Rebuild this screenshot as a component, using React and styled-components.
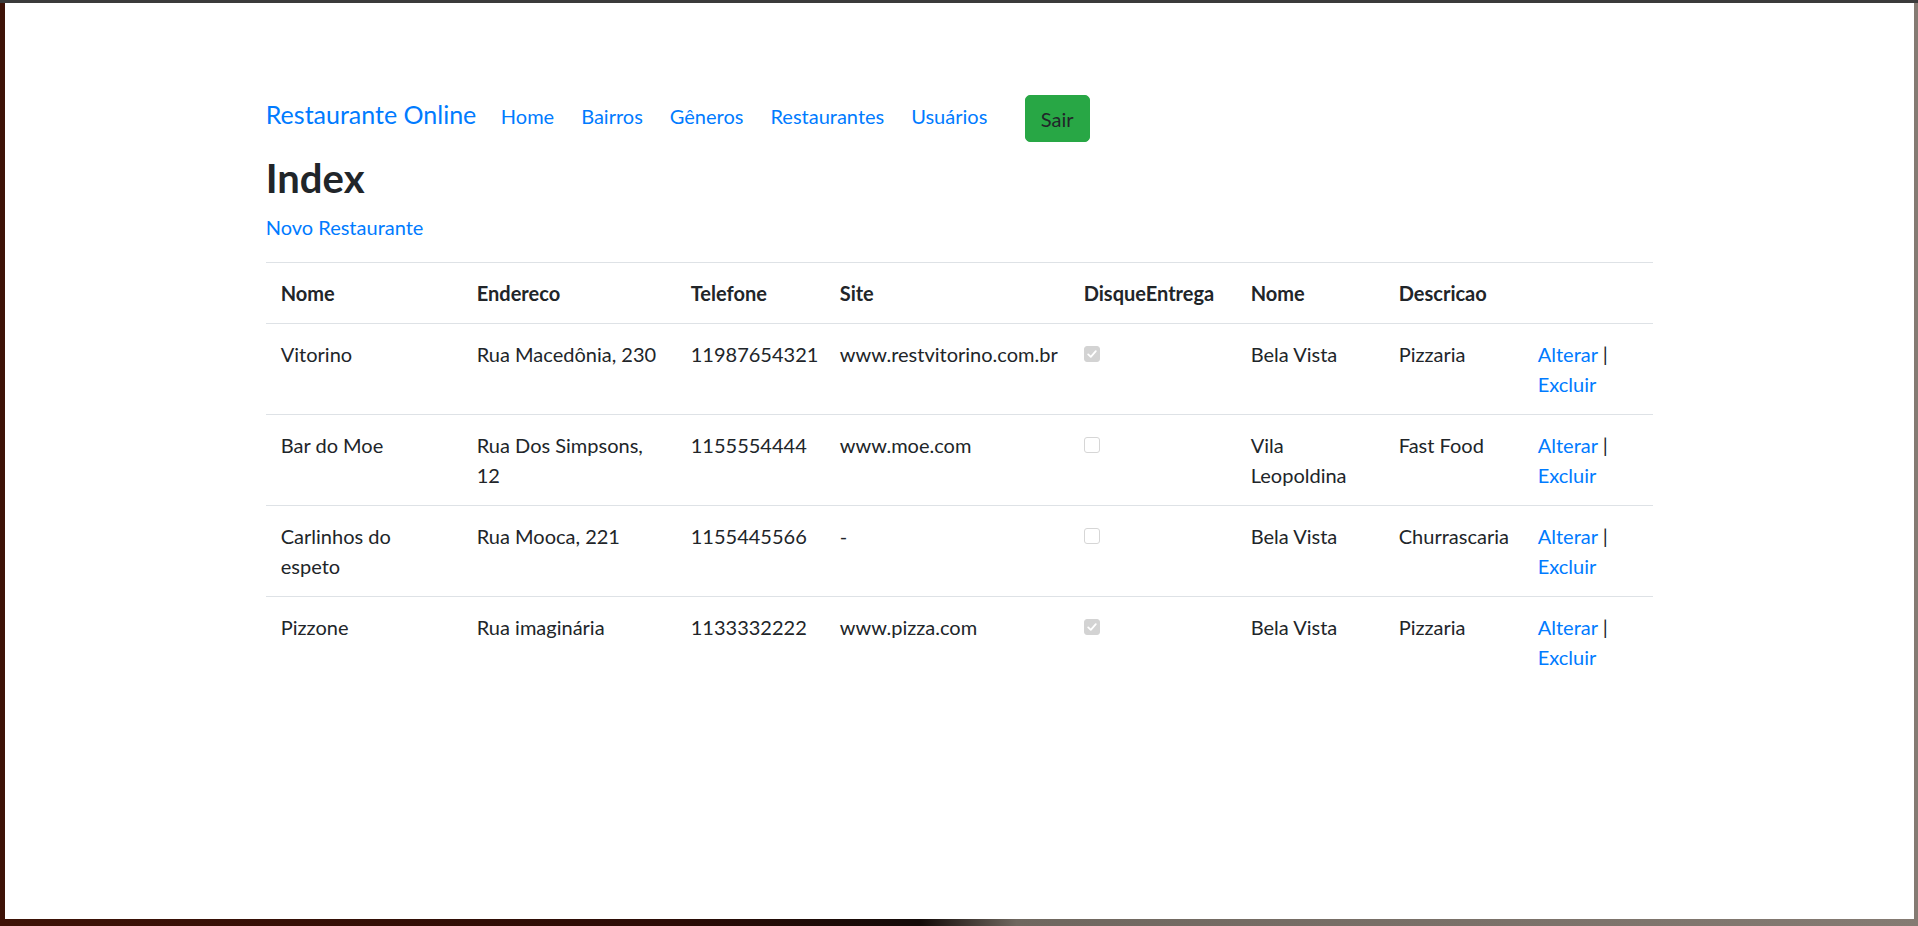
import React from "react";
import styled, { createGlobalStyle } from "styled-components";

const GlobalStyle = createGlobalStyle`
  html, body {
    margin: 0;
    padding: 0;
  }
  body {
    font-family: Lato, "Liberation Sans", sans-serif;
    color: #212529;
    background: #2a0b06;
  }
  * { box-sizing: border-box; }
`;

const Frame = styled.div`
  width: 100vw;
  height: 926px;
  border-top: 3px solid #3b3b3b;
  padding: 0 4px 7px 5px;
  background: linear-gradient(
    90deg,
    #3e1307 0%,
    #2c0c06 35%,
    #140b09 48%,
    #6f675f 53%,
    #857b73 100%
  );
`;

const Window = styled.div`
  background: #ffffff;
  height: 100%;
  overflow: hidden;
`;

const Container = styled.div`
  max-width: 1425px;
  margin: 0 auto;
  padding: 0 18.75px;
`;

const Nav = styled.nav`
  display: flex;
  align-items: flex-start;
  margin-top: 92px;
  height: 47.5px;
`;

const Brand = styled.a`
  font-size: 25px;
  line-height: 37.5px;
  margin-top: 1px;
  color: #007bff;
  text-decoration: none;
  margin-right: 11px;
`;

const NavList = styled.ul`
  display: flex;
  list-style: none;
  margin: 0;
  padding: 0;
`;

const NavLink = styled.a`
  display: block;
  font-size: 20px;
  line-height: 30px;
  margin-top: 5.5px;
  padding: 0 13.5px;
  color: #007bff;
  text-decoration: none;
`;

const LogoutButton = styled.button`
  margin-left: 24px;
  font-family: inherit;
  font-size: 20px;
  line-height: 30px;
  padding: 7.5px 15px;
  color: #212529;
  background: #28a745;
  border: 1.25px solid #28a745;
  border-radius: 5px;
  cursor: pointer;
`;

const Title = styled.h1`
  font-size: 40px;
  font-weight: 700;
  line-height: 48px;
  margin: 11px 0 10px;
`;

const Para = styled.p`
  margin: 0 0 20px;
  font-size: 20px;
  line-height: 30px;
`;

const Link = styled.a`
  color: #007bff;
  text-decoration: none;
`;

const Table = styled.table`
  width: 100%;
  border-collapse: collapse;
  table-layout: fixed;
  font-size: 20px;
  line-height: 30px;
  color: #212529;
`;

const Th = styled.th`
  text-align: left;
  font-weight: 700;
  padding: 15px;
  vertical-align: bottom;
  border-top: 1px solid #dee2e6;
  border-bottom: 1px solid #dee2e6;
  white-space: nowrap;
`;

const Td = styled.td`
  padding: 15px;
  vertical-align: top;
  border-top: 1px solid #dee2e6;
`;

const Check = styled.span`
  display: block;
  width: 16px;
  height: 16px;
  margin-top: 7px;
  border-radius: 3px;
  background: ${(p) => (p.$checked ? "#d3d3d3" : "#ffffff")};
  border: 1px solid ${(p) => (p.$checked ? "#d3d3d3" : "#d6d6d6")};
  position: relative;
  svg {
    position: absolute;
    left: 1px;
    top: 1px;
  }
`;

const Checkbox = ({ checked }) => (
  <Check $checked={checked}>
    {checked && (
      <svg width="12" height="12" viewBox="0 0 12 12" fill="none">
        <path
          d="M2.2 6.4 L4.8 8.9 L9.8 3.2"
          stroke="#ffffff"
          strokeWidth="1.8"
          strokeLinecap="round"
          strokeLinejoin="round"
        />
      </svg>
    )}
  </Check>
);

const rows = [
  {
    nome: "Vitorino",
    endereco: "Rua Macedônia, 230",
    telefone: "11987654321",
    site: "www.restvitorino.com.br",
    disque: true,
    bairro: "Bela Vista",
    genero: "Pizzaria",
  },
  {
    nome: "Bar do Moe",
    endereco: "Rua Dos Simpsons, 12",
    telefone: "1155554444",
    site: "www.moe.com",
    disque: false,
    bairro: "Vila Leopoldina",
    genero: "Fast Food",
  },
  {
    nome: "Carlinhos do espeto",
    endereco: "Rua Mooca, 221",
    telefone: "1155445566",
    site: "-",
    disque: false,
    bairro: "Bela Vista",
    genero: "Churrascaria",
  },
  {
    nome: "Pizzone",
    endereco: "Rua imaginária",
    telefone: "1133332222",
    site: "www.pizza.com",
    disque: true,
    bairro: "Bela Vista",
    genero: "Pizzaria",
  },
];

const colWidths = [196, 214, 149, 244, 167, 148, 139, null];

export default function App() {
  return (
    <>
      <GlobalStyle />
      <Frame>
        <Window>
          <Container>
            <Nav>
              <Brand href="#">Restaurante Online</Brand>
              <NavList>
                {["Home", "Bairros", "Gêneros", "Restaurantes", "Usuários"].map(
                  (l) => (
                    <li key={l}>
                      <NavLink href="#">{l}</NavLink>
                    </li>
                  )
                )}
              </NavList>
              <LogoutButton>Sair</LogoutButton>
            </Nav>
            <Title>Index</Title>
            <Para>
              <Link href="#">Novo Restaurante</Link>
            </Para>
            <Table>
              <colgroup>
                {colWidths.map((w, i) => (
                  <col key={i} style={w ? { width: `${w}px` } : undefined} />
                ))}
              </colgroup>
              <thead>
                <tr>
                  <Th>Nome</Th>
                  <Th>Endereco</Th>
                  <Th>Telefone</Th>
                  <Th>Site</Th>
                  <Th>DisqueEntrega</Th>
                  <Th>Nome</Th>
                  <Th>Descricao</Th>
                  <Th></Th>
                </tr>
              </thead>
              <tbody>
                {rows.map((r) => (
                  <tr key={r.nome}>
                    <Td>{r.nome}</Td>
                    <Td>{r.endereco}</Td>
                    <Td>{r.telefone}</Td>
                    <Td>{r.site}</Td>
                    <Td>
                      <Checkbox checked={r.disque} />
                    </Td>
                    <Td>{r.bairro}</Td>
                    <Td>{r.genero}</Td>
                    <Td>
                      <Link href="#">Alterar</Link> |{" "}
                      <Link href="#">Excluir</Link>
                    </Td>
                  </tr>
                ))}
              </tbody>
            </Table>
          </Container>
        </Window>
      </Frame>
    </>
  );
}
